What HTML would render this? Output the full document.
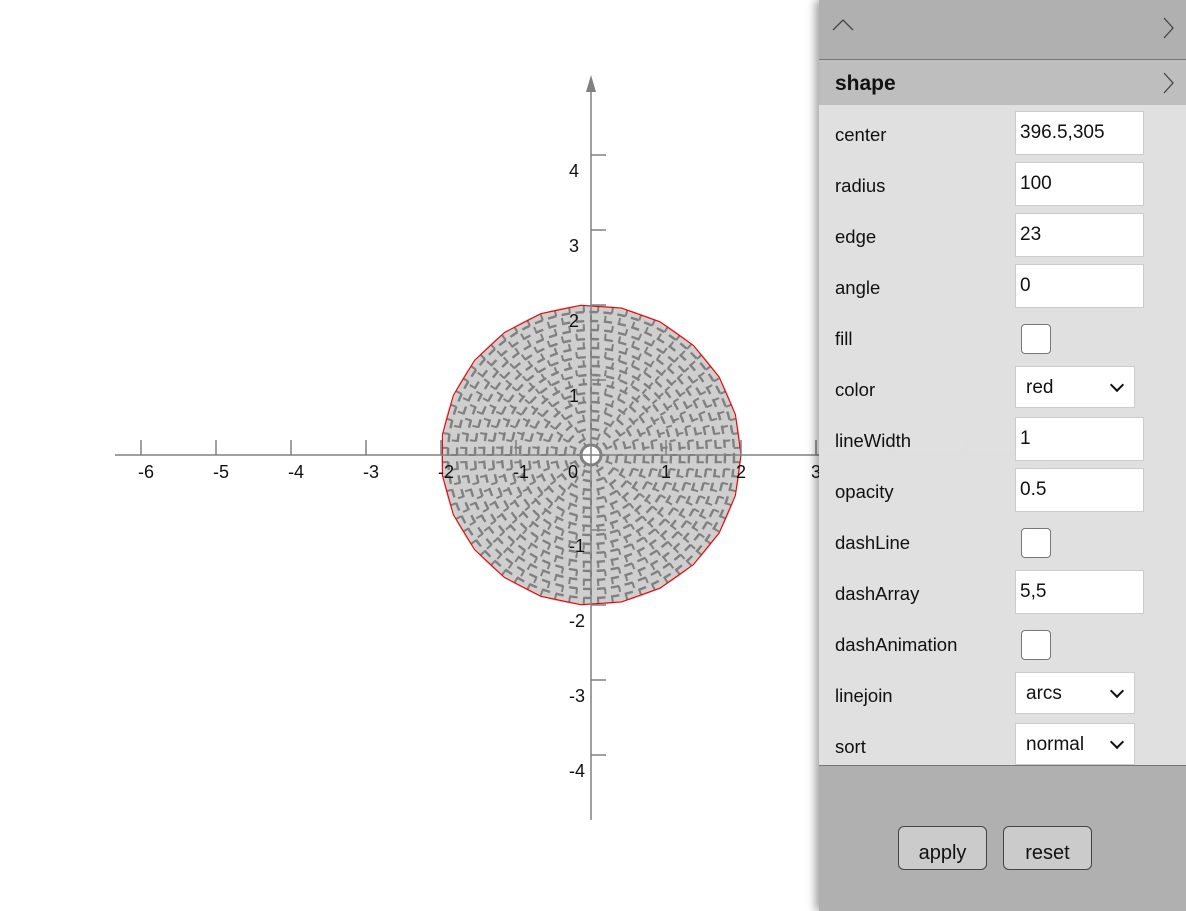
<!DOCTYPE html>
<html><head><meta charset="utf-8"><style>
body{margin:0;width:1186px;height:911px;overflow:hidden;background:#fff;font-family:"Liberation Sans",Arial,sans-serif;position:relative}
svg{position:absolute;left:0;top:0}
#panel{position:absolute;left:819px;top:0;width:367px;height:911px;background:rgba(173,173,173,.96);box-shadow:-4px 0 8px rgba(0,0,0,.35)}
.hdr{height:59px;border-bottom:1px solid #777;position:relative}
.shape{height:45px;background:#bebebe;position:relative;font-weight:bold;font-size:21px;line-height:47px;padding-left:16px;color:#111}
.rows{background:rgba(227,227,227,.93);height:660px;border-bottom:1px solid #777}
.row{height:51px;position:relative;font-size:18.5px;color:#111}
.row .l{position:absolute;left:16px;top:19px}
.inp{position:absolute;left:196px;top:6px;width:129px;height:44px;background:#fff;border:1px solid #ccc;box-sizing:border-box;padding-left:4px;line-height:42px;font-size:19px}
.sel{width:120px;height:42px;padding-left:10px}
.sel:after{content:"";position:absolute;right:12px;top:13px;width:8px;height:8px;border-right:2px solid #111;border-bottom:2px solid #111;transform:rotate(45deg)}
.cb{position:absolute;left:202px;top:15px;width:30px;height:30px;background:#fff;border:1px solid #777;border-radius:4px;box-sizing:border-box}
.btn{position:absolute;top:826px;width:89px;height:44px;border:1px solid #444;border-radius:6px;background:#cbcbcb;box-sizing:border-box;text-align:center;line-height:52px;font-size:20px;color:#111}
</style></head><body>
<svg id="g" width="1186" height="911" xmlns="http://www.w3.org/2000/svg" font-family="Liberation Sans,Arial,sans-serif" font-size="18"></svg>
<div id="panel">
<div class="hdr"><svg width="367" height="59"><path d="M14 30 L24 20 L34 30" fill="none" stroke="#444" stroke-width="1.3"/><path d="M345 18 L354 28 L345 38" fill="none" stroke="#444" stroke-width="1.3"/></svg></div>
<div class="shape">shape<svg width="20" height="45" style="position:absolute;left:340px;top:0"><path d="M5 13 L14 23 L5 33" fill="none" stroke="#444" stroke-width="1.3"/></svg></div>
<div class="rows">
<div class="row"><span class="l">center</span><div class="inp">396.5,305</div></div>
<div class="row"><span class="l">radius</span><div class="inp">100</div></div>
<div class="row"><span class="l">edge</span><div class="inp">23</div></div>
<div class="row"><span class="l">angle</span><div class="inp">0</div></div>
<div class="row"><span class="l">fill</span><div class="cb"></div></div>
<div class="row"><span class="l">color</span><div class="inp sel">red</div></div>
<div class="row"><span class="l">lineWidth</span><div class="inp">1</div></div>
<div class="row"><span class="l">opacity</span><div class="inp">0.5</div></div>
<div class="row"><span class="l">dashLine</span><div class="cb"></div></div>
<div class="row"><span class="l">dashArray</span><div class="inp">5,5</div></div>
<div class="row"><span class="l">dashAnimation</span><div class="cb"></div></div>
<div class="row"><span class="l">linejoin</span><div class="inp sel">arcs</div></div>
<div class="row"><span class="l">sort</span><div class="inp sel">normal</div></div>
</div>
</div>
<div class="btn" style="left:898px">apply</div>
<div class="btn" style="left:1003px">reset</div>
<script>
var s='',cx=591,cy=455,u=75;
s+='<circle cx="591" cy="455" r="150" fill="#cfcfcf"/>';
for(var r=8;r<148;r+=9){var c=2*Math.PI*r;var n=Math.max(6,Math.round(c/14));var d=c/n;
s+='<circle cx="591" cy="455" r="'+r+'" fill="none" stroke="#808080" stroke-width="2.4" stroke-dasharray="'+(d*0.6).toFixed(1)+' '+(d*0.4).toFixed(1)+'"/>';
for(var i=0;i<n;i++){var a=(i+(r%2?0.5:0))/n*2*Math.PI;s+='<line x1="'+(cx+r*Math.cos(a)).toFixed(1)+'" y1="'+(cy+r*Math.sin(a)).toFixed(1)+'" x2="'+(cx+(r+6)*Math.cos(a)).toFixed(1)+'" y2="'+(cy+(r+6)*Math.sin(a)).toFixed(1)+'" stroke="#808080" stroke-width="2"/>';}}
s+='<circle cx="591" cy="455" r="10" fill="#fff" stroke="#808080" stroke-width="3"/>';
var p=[];for(var i=0;i<23;i++){var a=i/23*2*Math.PI;p.push((cx+150*Math.cos(a)).toFixed(1)+','+(cy-150*Math.sin(a)).toFixed(1));}
s+='<polygon points="'+p.join(' ')+'" fill="none" stroke="#e00" stroke-width="1.1"/>';
s+='<line x1="115" y1="455" x2="1100" y2="455" stroke="#808080" stroke-width="1.5"/>';
s+='<line x1="591" y1="820" x2="591" y2="85" stroke="#808080" stroke-width="1.5"/>';
s+='<polygon points="591,75 586,92 596,92" fill="#808080"/>';
for(var k=-6;k<=6;k++){if(!k)continue;var x=cx+k*u;s+='<line x1="'+x+'" y1="440" x2="'+x+'" y2="455" stroke="#808080" stroke-width="1.5"/>';s+='<text x="'+(x+(k<0?5:0))+'" y="478" text-anchor="middle" fill="#111">'+k+'</text>';}
s+='<text x="573" y="478" text-anchor="middle" fill="#111">0</text>';
for(var k=-4;k<=4;k++){if(!k)continue;var y=cy-k*u;s+='<line x1="591" y1="'+y+'" x2="606" y2="'+y+'" stroke="#808080" stroke-width="1.5"/>';s+='<text x="'+(k<0?577:574)+'" y="'+(y+22)+'" text-anchor="middle" fill="#111">'+k+'</text>';}
document.getElementById('g').innerHTML=s;
</script>
</body></html>
